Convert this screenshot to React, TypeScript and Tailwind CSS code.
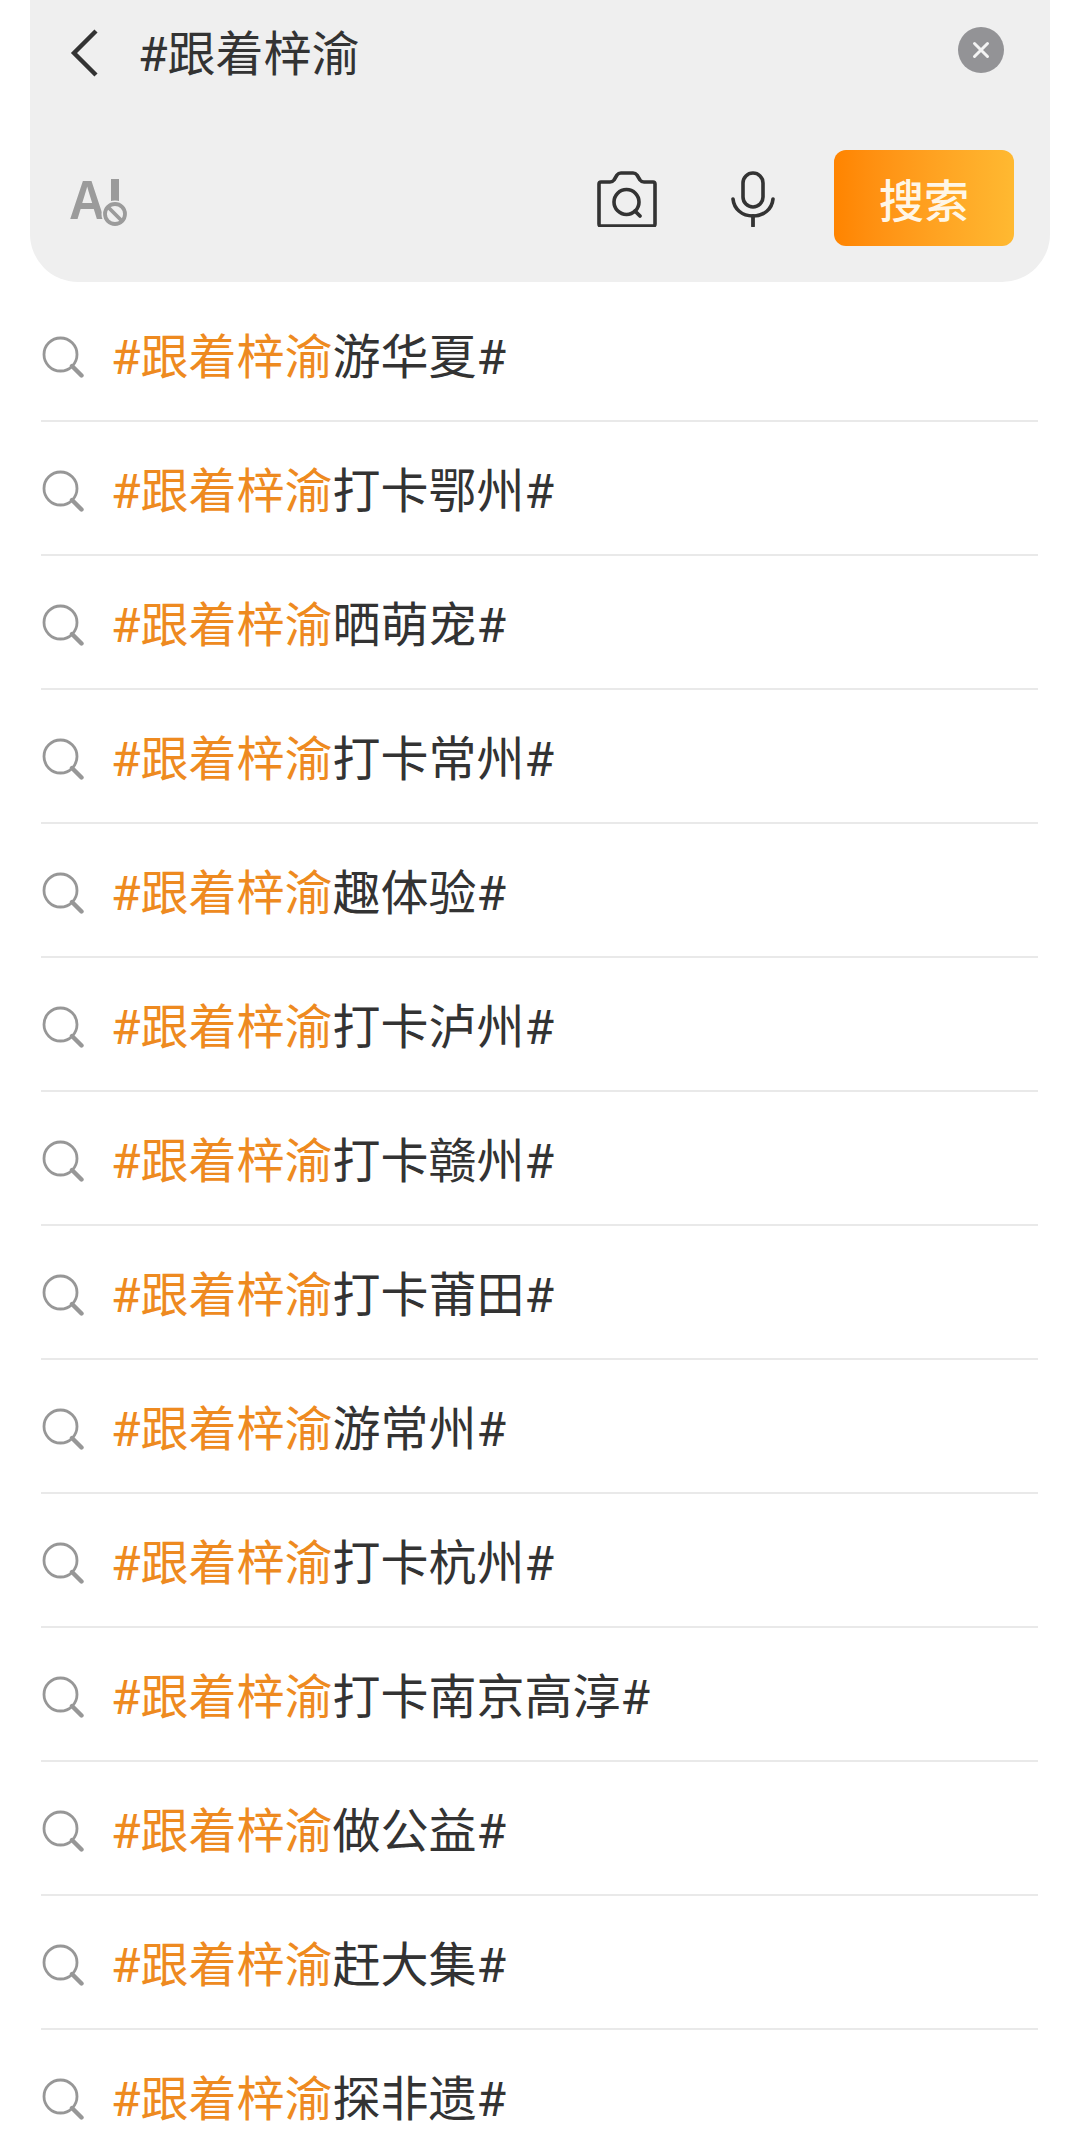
const suffixes = [
  "游华夏#",
  "打卡鄂州#",
  "晒萌宠#",
  "打卡常州#",
  "趣体验#",
  "打卡泸州#",
  "打卡赣州#",
  "打卡莆田#",
  "游常州#",
  "打卡杭州#",
  "打卡南京高淳#",
  "做公益#",
  "赶大集#",
  "探非遗#",
];

function SearchIcon() {
  return (
    <svg width="42" height="42" viewBox="0 0 42 42" fill="none" className="mt-[5px] shrink-0">
      <circle cx="18.5" cy="18.5" r="16.5" stroke="#979797" strokeWidth="2.8" />
      <path d="M30 30 L39.5 39.5" stroke="#979797" strokeWidth="4.4" strokeLinecap="round" />
    </svg>
  );
}

function Row({ suffix }: { suffix: string }) {
  return (
    <div className="flex h-[134px] items-center border-b-2 border-[#e9e9e9] pl-[1px]">
      <SearchIcon />
      <div className="ml-[27px] mt-[7px] whitespace-nowrap text-[48px] leading-none">
        <span className="text-[#ee8a20]">#跟着梓渝</span>
        <span className="text-[#333333]">{suffix}</span>
      </div>
    </div>
  );
}

export default function App() {
  return (
    <div
      className="h-[2134px] w-[1080px] overflow-hidden bg-white"
      style={{ fontFamily: 'Roboto, "Noto Sans CJK SC", "Noto Sans", sans-serif' }}
    >
      <div className="ml-[30px] flex h-[282px] w-[1020px] flex-col rounded-b-[48px] bg-[#efefef] pl-[41px] pr-[36px]">
        <div className="flex h-[100px] items-center">
          <svg width="30" height="48" viewBox="0 0 30 48" fill="none" className="shrink-0 mt-[6px] -ml-[1px]">
            <path d="M26 2 L4 24 L26 46" stroke="#333333" strokeWidth="4.4" />
          </svg>
          <div className="ml-[38px] text-[48px] leading-none text-[#333333] mt-[9px]">#跟着梓渝</div>
          <div className="ml-auto mr-[10px] flex h-[46px] w-[46px] items-center justify-center rounded-full bg-[#939396]">
            <svg width="18" height="18" viewBox="0 0 18 18" fill="none">
              <path d="M2.5 2.5 L15.5 15.5 M15.5 2.5 L2.5 15.5" stroke="#f4f4f4" strokeWidth="3" strokeLinecap="round" />
            </svg>
          </div>
        </div>
        <div className="mt-[50px] flex h-[96px] items-center">
          <svg width="58" height="62" viewBox="0 0 58 62" fill="none" className="-ml-[2px] mt-[4px] shrink-0">
            <text
              x="0"
              y="50"
              fontSize="56"
              fontWeight="700"
              fill="#9b9b9b"
              transform="scale(0.9 1)"
              style={{ fontFamily: '"Liberation Sans", sans-serif' }}
            >
              A
            </text>
            <rect x="42" y="10" width="8" height="22" fill="#9b9b9b" />
            <circle cx="46" cy="45" r="13.5" fill="#efefef" />
            <circle cx="46" cy="45" r="10" stroke="#9b9b9b" strokeWidth="3.8" />
            <path d="M39 38 L53 52" stroke="#9b9b9b" strokeWidth="3.8" />
          </svg>
          <svg width="60" height="56" viewBox="0 0 60 56" fill="none" className="ml-[470px] mt-[2px] shrink-0">
            <path
              d="M4 11 H13 Q15.5 11 17 9 L20 4 Q21.5 2 24 2 H36 Q38.5 2 40 4 L43 9 Q44.5 11 47 11 H56 Q58 11 58 13 V53 Q58 55 56 55 H4 Q2 55 2 53 V13 Q2 11 4 11 Z"
              stroke="#333333"
              strokeWidth="3.6"
              strokeLinejoin="round"
            />
            <circle cx="29.5" cy="31" r="12.5" stroke="#333333" strokeWidth="3.6" />
            <path d="M38 40 L43 45" stroke="#333333" strokeWidth="3.8" strokeLinecap="round" />
          </svg>
          <svg width="44" height="56" viewBox="0 0 44 56" fill="none" className="ml-[74px] mt-[2px] shrink-0">
            <rect x="12" y="2" width="20" height="34" rx="10" stroke="#333333" strokeWidth="3.6" />
            <path d="M2 28 C3 38 11 45 22 45 C33 45 41 38 42 28" stroke="#333333" strokeWidth="3.6" strokeLinecap="round" />
            <path d="M22 45 V55" stroke="#333333" strokeWidth="3.8" strokeLinecap="round" />
          </svg>
          <div className="ml-auto flex h-[96px] w-[180px] items-center justify-center rounded-[12px] bg-gradient-to-r from-[#ff8400] to-[#ffb931] pt-[8px] text-[45px] font-medium leading-none text-[#fff6e6]">
            搜索
          </div>
        </div>
      </div>
      <div className="ml-[41px] mt-[6px] w-[997px]">
        {suffixes.map((s, i) => (
          <Row key={i} suffix={s} />
        ))}
      </div>
    </div>
  );
}
